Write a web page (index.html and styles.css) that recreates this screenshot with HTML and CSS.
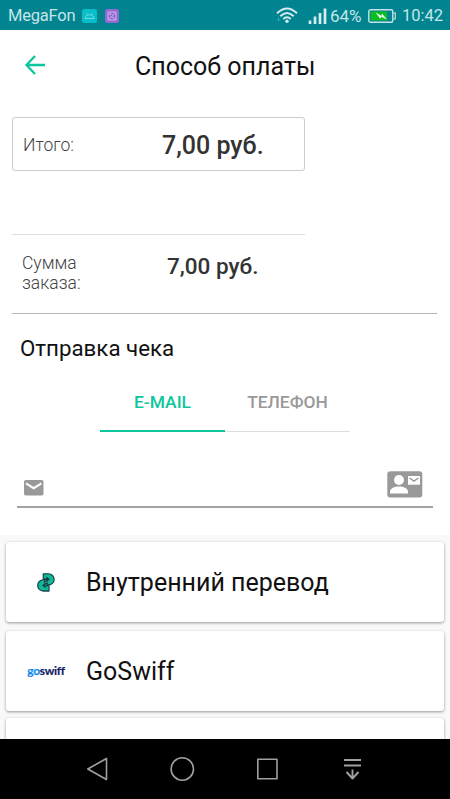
FILE: index.html
```html
<!DOCTYPE html>
<html lang="ru">
<head>
<meta charset="utf-8">
<title>Способ оплаты</title>
<link rel="stylesheet" href="styles.css">
</head>
<body>
<div class="screen">
  <header class="status">
    <span class="carrier">MegaFon</span>
    <svg class="app-badge" width="15" height="14" viewBox="0 0 15 14"><rect width="15" height="14" rx="2.5" fill="#07bec9"/><path d="M3 9.500c.3-5 8.700-5 9 0zM4.500 4.200l1 1.400M10.500 4.200l-1 1.400" fill="none" stroke="#79dfe4" stroke-width=".9"/></svg>
    <svg class="app-badge image-badge" width="14" height="14" viewBox="0 0 14 14"><rect width="14" height="14" rx="2.500" fill="#9467d3"/><path d="M3 3h8v8H3zM3.500 10.500l7-7M7 7.500l3.500 3" fill="none" stroke="#c9b5ea"/><circle cx="5.200" cy="5" r="1" fill="#c9b5ea"/></svg>
    <svg class="wifi" width="22" height="17" viewBox="0 0 22 17"><g fill="none" stroke="#d5edf0" stroke-width="1.900"><path d="M1 6.300Q11-3.500 21 6.300M4.300 9.200Q11 2.700 17.700 9.200M7.300 12Q11 8.500 14.700 12"/></g><circle cx="11" cy="14.200" r="1.700" fill="#d5edf0"/><path d="M2.500 10v4M1 12.500l1.500 1.500L4 12.500" stroke="#13b5bd" fill="none"/></svg>
    <svg class="signal" width="19" height="16" viewBox="0 0 19 16"><path d="M2 16v-3.500M7 16V8.500M12 16V5M17 16V.5" stroke="#d5edf0" stroke-width="2.700"/></svg>
    <span class="percent">64%</span>
    <svg class="battery" width="28" height="14" viewBox="0 0 28 14"><rect x=".8" y=".8" width="24" height="12.400" rx="1.800" fill="none" stroke="#c3e4e7" stroke-width="1.400"/><path d="M25 4h2.300v6H25" fill="none" stroke="#c3e4e7" stroke-width="1.200"/><path d="M2.500 2.500H19v9H2.500z" fill="#0bbd22"/><path d="M7.500 3.500l6 3.200.5-2.200 5 6-6-2.800-.5 2.200z" fill="#eafbea"/></svg>
    <span class="clock">10:42</span>
  </header>

  <div class="titlebar">
    <svg class="back" width="22" height="20" viewBox="0 0 22 20"><path d="M11 1L2.500 10l8.500 9M2.500 10H21" fill="none" stroke="#0bc79b" stroke-width="2.300"/></svg>
    <h1 class="title">Способ оплаты</h1>
  </div>

  <section class="total">
    <span class="label">Итого:</span>
    <strong class="total-value">7,00 руб.</strong>
  </section>

  <section class="order">
    <div class="order-row">
      <span class="label order-label">Сумма заказа:</span>
      <strong class="order-value">7,00 руб.</strong>
    </div>
  </section>

  <h2 class="subtitle">Отправка чека</h2>

  <div class="tabs">
    <div class="tab active"><span class="tab-email">E-MAIL</span></div>
    <div class="tab"><span class="tab-phone">ТЕЛЕФОН</span></div>
  </div>

  <div class="field">
    <svg class="mail" width="20" height="16" viewBox="0 0 20 16"><rect width="19.500" height="15.500" rx="1.700" fill="#999"/><path d="M2 3.300l7.700 4.900 7.700-4.900" fill="none" stroke="#fff" stroke-width="2"/></svg>
    <svg class="contact" width="36" height="27" viewBox="0 0 36 27"><rect x=".3" y=".3" width="35" height="26.200" rx="3" fill="#999"/><circle cx="12" cy="9" r="5" fill="#fff"/><path d="M3 22.500v-1.700c0-7 18-7 18 0v1.700z" fill="#fff"/><path d="M21 5h12v8.700H21z" fill="#fff"/><path d="M22.500 7l4.500 3.200L31.500 7" fill="none" stroke="#999" stroke-width="1.500"/></svg>
  </div>

  <main class="list">
    <article class="card">
      <div class="logo">
        <svg width="18" height="19" viewBox="0 0 18 19"><g stroke="#174a58" stroke-width="1.300" stroke-linejoin="round" fill="#12b995"><path d="M6.300.8h5.200a5.600 5.600 0 0 1 0 11.200h-1.300V9.200L6.300 7z"/><path d="M12 18H6.300a5.600 5.600 0 0 1 0-11.200h1.300v2.900L12 12z"/></g><path d="M9.300 3.500L13 6.200 9.300 9zM8.700 9.800L5 12.500l3.700 2.700zM7 5.500h3v1.500H7zM8 11.800h3v1.500H8z" fill="#123a45"/></svg>
      </div>
      <span class="name name-internal">Внутренний перевод</span>
    </article>
    <article class="card">
      <div class="logo goswiff"><span class="go">go</span><span class="swiff">swiff</span></div>
      <span class="name name-goswiff">GoSwiff</span>
    </article>
    <article class="card last"></article>
  </main>

  <nav class="nav">
    <svg width="330" height="59" viewBox="60 740 330 59" fill="none" stroke="#a0a0a0" stroke-width="1.600" stroke-linejoin="round"><path d="M87.800 769L106.500 758.500V779.500z"/><circle cx="182.300" cy="769" r="11.200"/><rect x="257.800" y="759.300" width="19.200" height="19.500"/><path d="M344 760h17M344 765.500h17M352.500 769.500v9M346.500 772l6 6.500 6-6.500" stroke-width="1.900"/></svg>
  </nav>
</div>
</body>
</html>
```

FILE: styles.css
```css
* { box-sizing: border-box; }
body { margin: 0; font-family: Roboto, "Noto Sans", sans-serif; background: #fff; }
svg { display: block; flex: none; }
span, strong, h1, h2 { white-space: nowrap; }
.screen { width: 450px; height: 799px; display: flex; flex-direction: column; overflow: hidden; background: #fff; }
.screen > * { flex: none; }

.status { height: 30px; display: flex; align-items: center; padding: 1px 0 0 8px; background: #018390; color: #c5e6e9; }
.carrier { width: 74px; font-size: 16.5px; letter-spacing: -.2px; }
.image-badge { margin-left: 8px; }
.wifi { margin-left: 157px; }
.signal { margin-left: 10px; }
.percent { width: 38px; margin-left: 3px; font-size: 17px; }
.clock { margin-left: 6px; font-size: 16.5px; }

.titlebar { height: 87px; display: flex; align-items: flex-start; padding: 20px 0 0 24px; }
.back { margin-top: 5px; }
.title { margin: 1px 0 0 89px; font-size: 25px; line-height: 32px; font-weight: 400; color: #111; }

.total { width: 293px; height: 54px; margin-left: 12px; display: flex; align-items: center; padding-left: 10px; border: 1px solid #ccc; border-radius: 3px; }
.label { width: 139px; font-size: 17.5px; font-weight: 300; color: #444; }
.total .label { margin-top: 2px; }
.total-value { font-size: 25px; font-weight: 500; color: #333; margin-top: 3px; }

.order { width: 425px; height: 80px; margin: 63px 0 0 12px; border-bottom: 1px solid #b5b5b5; }
.order-row { width: 293px; display: flex; align-items: flex-start; padding: 17px 0 0 10px; border-top: 1px solid #ddd; }
.order-label { width: 145px; padding: 1px 70px 0 0; line-height: 20px; white-space: normal; }
.order-value { font-size: 22.5px; line-height: 28px; font-weight: 500; color: #333; }

.subtitle { height: 57px; margin: 0 0 0 20px; padding-top: 18px; font-size: 22.3px; line-height: 32px; font-weight: 400; color: #111; }

.tabs { width: 250px; height: 61px; margin-left: 100px; display: flex; }
.tab { width: 125px; padding-top: 19px; border-bottom: 1px solid #ddd; text-align: center; font-size: 17.4px; line-height: 24px; font-weight: 500; color: #999; }
.active { border-bottom: 2px solid #0bc79b; color: #0bc79b; }

.field { width: 416px; height: 76px; margin-left: 17px; display: flex; justify-content: space-between; align-items: flex-start; padding: 39px 10px 0 7px; border-bottom: 2px solid #a2a2a2; }
.mail { margin-top: 9px; }

.list { height: 204px; margin-top: 27px; padding: 7px 6px 0; display: flex; flex-direction: column; gap: 9px; background: #f9f9f9; overflow: hidden; }
.card { flex: none; height: 80px; display: flex; align-items: center; border-radius: 3px; background: #fff; box-shadow: 0 1px 3px rgba(0,0,0,.4); }
.last { margin-top: -2px; }
.logo { width: 80px; display: flex; justify-content: center; }
.goswiff { font: 700 12px Lato, sans-serif; letter-spacing: -.3px; padding-bottom: 2px; -webkit-text-stroke: .2px; }
.go { color: #1389ee; }
.swiff { color: #10205f; }
.name { font-size: 25px; color: #111; padding-top: 1px; }

.nav { height: 60px; padding: 1px 0 0 60px; background: #000; }
```
